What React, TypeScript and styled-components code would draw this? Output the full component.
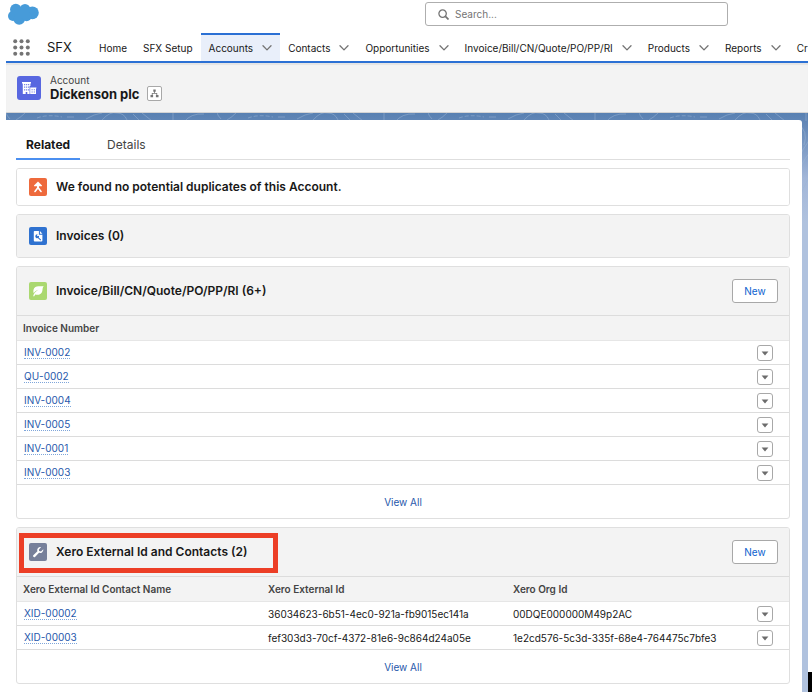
import React from "react";
import styled, { createGlobalStyle } from "styled-components";

const Global = createGlobalStyle`
  *, *::before, *::after { box-sizing: border-box; }
  body { margin: 0; background: #fff; color: #181818; font-family: Inter, "Liberation Sans", sans-serif; font-size: 10px; line-height: 12px; }
  button, input { font: inherit; color: inherit; }
  a { text-decoration: none; }
`;

const Shell = styled.div`
  display: flex;
  padding: 0 0 6px 6px;
  overflow: hidden;
`;
const Main = styled.div`
  flex: 1;
  min-width: 0;
`;
const Gutter = styled.div`
  display: flex;
  flex-direction: column;
  justify-content: flex-end;
  width: 4px;
`;
const GutterMark = styled.div`
  height: 20px;
  background: #000;
`;

const TopBar = styled.header`
  display: flex;
  justify-content: space-between;
  align-items: flex-start;
  height: 33px;
  padding: 2px 80px 0 2px;
`;
const SearchBox = styled.label`
  display: flex;
  align-items: center;
  gap: 6px;
  width: 303px;
  height: 24px;
  padding: 0 12px;
  border: 1px solid #aeaeae;
  border-radius: 3px;
  color: #747474;
`;
const SearchInput = styled.input`
  flex: 1;
  min-width: 0;
  padding: 0;
  border: 0;
  outline: 0;
  background: none;
  &::placeholder { color: #747474; opacity: 1; }
`;

const NavBar = styled.nav`
  display: flex;
  align-items: stretch;
  height: 30px;
  border-bottom: 2px solid #2b70d4;
  overflow: hidden;
`;
const Launcher = styled.button`
  display: flex;
  flex: none;
  align-items: center;
  padding: 0 0 0 7px;
  border: 0;
  background: none;
`;
const AppName = styled.span`
  display: flex;
  flex: none;
  align-items: center;
  width: 44px;
  margin-left: 17px;
  font-size: 13px;
`;
const NavItem = styled.div<{ $active?: boolean }>`
  display: flex;
  flex: none;
  align-items: center;
  gap: 9px;
  padding: 0 8px;
  border-top: 2px solid ${(p) => (p.$active ? "#2b70d4" : "transparent")};
  background: ${(p) => (p.$active ? "#e9effa" : "none")};
`;
const NavLink = styled.a`
  color: #181818;
  white-space: nowrap;
`;
const NavToggle = styled.button`
  display: flex;
  padding: 0;
  border: 0;
  background: none;
`;

const RecordHeader = styled.section`
  display: flex;
  align-items: center;
  gap: 9px;
  height: 50px;
  padding: 0 11px;
  background: #f3f3f3;
  border-bottom: 1px solid #d4d4d4;
  box-shadow: inset 0 2px 1px #e4e4e4;
`;
const RecordKind = styled.div`
  color: #444;
`;
const RecordTitle = styled.div`
  display: flex;
  align-items: center;
  gap: 8px;
`;
const RecordName = styled.h1`
  margin: 0;
  font-size: 13px;
  line-height: 16px;
  font-weight: 700;
`;
const HierarchyButton = styled.button`
  display: grid;
  place-items: center;
  width: 15px;
  height: 15px;
  padding: 0;
  border: 1px solid #a8a8a8;
  border-radius: 2px;
  background: #fff;
`;

const Stage = styled.main`
  position: relative;
  padding: 7px 6px 0 0;
  background: linear-gradient(#5880b2, #7897c2 30px, #a2b6d8 65px, #b0c2de 110px);
`;
const Contours = styled.svg`
  position: absolute;
  inset: 0;
  width: 100%;
  height: 90px;
`;
const Panel = styled.div`
  position: relative;
  padding: 9px 12px 8px 10px;
  border-top-right-radius: 3px;
  background: #fff;
`;
const TabRow = styled.div`
  display: flex;
  height: 31px;
  margin-bottom: 8px;
  border-bottom: 1px solid #dedede;
`;
const Tab = styled.button<{ $active?: boolean }>`
  height: 31px;
  padding: 2px 10px 0;
  margin-right: 17px;
  border: 0;
  border-bottom: 2px solid ${(p) => (p.$active ? "#4b8ff0" : "transparent")};
  background: none;
  font-size: 12px;
  font-weight: ${(p) => (p.$active ? 700 : 400)};
  color: ${(p) => (p.$active ? "#181818" : "#444")};
`;

const Cards = styled.div`
  display: grid;
  gap: 8px;
`;
const Card = styled.article`
  overflow: hidden;
  border: 1px solid #dfdfdf;
  border-radius: 3px;
`;
const CardHeader = styled.header<{ $size: "small" | "medium" | "large" }>`
  position: relative;
  display: flex;
  align-items: center;
  gap: 9px;
  height: ${(p) => ({ small: 36, medium: 42, large: 48 })[p.$size]}px;
  padding: 0 11px 0 12px;
  background: ${(p) => (p.$size === "small" ? "#fff" : "#f3f3f3")};
`;
const CardTitle = styled.h2`
  flex: 1;
  margin: 0;
  font-size: 12px;
  line-height: 16px;
  font-weight: 600;
`;
const NewButton = styled.button`
  width: 46px;
  height: 24px;
  padding: 0;
  border: 1px solid #a8a8a8;
  border-radius: 3px;
  background: #fff;
  color: #0b62cf;
`;
const Highlight = styled.div`
  position: absolute;
  top: 5px;
  left: 2px;
  width: 259px;
  height: 40px;
  border: 5px solid #ec3e26;
  pointer-events: none;
`;

const Table = styled.table`
  width: 100%;
  table-layout: fixed;
  border-spacing: 0;
  border-top: 1px solid #dcdcdc;
`;
const HeadCell = styled.th<{ $menu?: boolean }>`
  width: ${(p) => (p.$menu ? "37px" : "auto")};
  height: 25px;
  padding: 0 6px;
  background: #f3f3f3;
  border-bottom: 1px solid #e6e6e6;
  color: #444;
  font-weight: 600;
  text-align: left;
`;
const Cell = styled.td`
  height: 24px;
  padding: 0 6px;
  border-bottom: 1px solid #dcdcdc;
  white-space: nowrap;
`;
const MenuCell = styled(Cell)`
  padding: 1px 5px 0;
`;
const RecordLink = styled.a`
  display: inline-block;
  margin-left: 1px;
  border-bottom: 1px dotted #7fa6da;
  color: #1f58ab;
`;
const RowMenu = styled.button`
  display: grid;
  place-items: center;
  width: 16px;
  height: 16px;
  padding: 0;
  border: 1px solid #a8a8a8;
  border-radius: 3px;
  background: #fff;
`;
const CardFooter = styled.footer`
  display: grid;
  place-items: center;
  height: 33px;
`;
const ViewAll = styled.a`
  color: #1f58ab;
`;
const Drawing = styled.svg`
  display: block;
  flex: none;
`;

const Cloud = () => (
  <Drawing width="31" height="23" viewBox="0 0 31 23" fill="#479bd9">
    <circle cx="7.8" cy="7.6" r="5.8" />
    <circle cx="17" cy="7.2" r="5.3" />
    <circle cx="24.4" cy="10.8" r="6.4" />
    <circle cx="4.9" cy="14" r="4.9" />
    <circle cx="11.2" cy="16.9" r="5.9" />
    <circle cx="18.6" cy="14.3" r="5" />
    <rect x="7" y="6" width="14" height="10" />
  </Drawing>
);
const SearchIcon = () => (
  <Drawing width="11" height="11" viewBox="0 0 11 11" fill="none" stroke="#747474" strokeWidth="1.3">
    <circle cx="4.6" cy="4.6" r="3.7" />
    <path d="M7.4 7.4L10.5 10.5" strokeWidth="1.7" />
  </Drawing>
);
const Waffle = () => (
  <Drawing width="17" height="17" viewBox="0 0 17 17" fill="#747474">
    {[2.2, 8.5, 14.8].map((y) => [2.2, 8.5, 14.8].map((x) => <circle key={`${x}-${y}`} cx={x} cy={y} r="2" />))}
  </Drawing>
);
const Chevron = () => (
  <Drawing width="10" height="6" viewBox="0 0 10 6" fill="none" stroke="#747474" strokeWidth="1.3" strokeLinecap="round" strokeLinejoin="round">
    <path d="M1 .8L5 4.9L9 .8" />
  </Drawing>
);
const Triangle = () => (
  <Drawing width="8" height="5" viewBox="0 0 8 5" fill="#6c6c6c">
    <path d="M.6 .4H7.4L4 4.6Z" />
  </Drawing>
);
const Hierarchy = () => (
  <Drawing width="9" height="9" viewBox="0 0 9 9" fill="#747474">
    <path d="M3.3 .6H5.7V2.8H4.9V4H7.2V5.9H8.5V8.3H5.9V5.9H6.4V4.8H2.6V5.9H3.1V8.3H.5V5.9H1.8V4H4.1V2.8H3.3Z" />
  </Drawing>
);
const AccountIcon = () => (
  <Drawing width="24" height="24" viewBox="0 0 24 24">
    <rect width="24" height="24" rx="3" fill="#5867e0" />
    <path d="M5 6H14V7.4H13.4V10H12.6V18H5.8V7.4H5ZM13.2 11.4H19.4V12.6H19V18H13.2Z" fill="#fff" />
    <path d="M7.2 8h1v1.2h-1zM9.2 8h1v1.2h-1zM11.2 8h1v1.2h-1zM7.2 10.6h1v1.2h-1zM9.2 10.6h1v1.2h-1zM11.2 10.6h1v1.2h-1zM7.2 13.2h1v1.2h-1zM9.2 13.2h1v1.2h-1zM11.2 13.2h1v1.2h-1zM8.7 15.9h1.6v2.1H8.7zM14.6 13.3h1v1h-1zM16.8 13.3h1v1h-1zM14.6 15.6h1v1h-1zM16.8 15.6h1v1h-1z" fill="#5867e0" />
  </Drawing>
);
const MergeIcon = () => (
  <Drawing width="18" height="18" viewBox="0 0 18 18">
    <rect width="18" height="18" rx="2" fill="#ee6a3c" />
    <path d="M9 3.5L13 7.6Q13.2 8.2 12.6 8.2H10V9.6L12.8 13.3Q13 13.9 12.4 14.3Q11.8 14.5 11.4 14.1L9 11.1L6.6 14.1Q6.2 14.5 5.6 14.3Q5 13.9 5.2 13.3L8 9.6V8.2H5.4Q4.8 8.2 5 7.6Z" fill="#fff" />
  </Drawing>
);
const InvoiceIcon = () => (
  <Drawing width="18" height="18" viewBox="0 0 18 18">
    <rect width="18" height="18" rx="2" fill="#2f72d0" />
    <path d="M5 4H9.9V7.8H13.4V13.4Q13.4 14.4 12.4 14.4H5.8Q4.8 14.4 4.8 13.4V4.8Q4.8 4 5.6 4ZM10.9 4L13.4 6.7H10.9Z" fill="#fff" />
    <path d="M6.3 8.9A2 2 0 0 1 8.6 7.4L7.9 8.6L8.8 9.3L10 8.7A2 2 0 0 1 9.7 10.4L12.2 12.7L11.5 13.5L8.8 11.1A2 2 0 0 1 6.3 8.9Z" fill="#2f72d0" />
  </Drawing>
);
const LeafIcon = () => (
  <Drawing width="18" height="18" viewBox="0 0 18 18">
    <rect width="18" height="18" rx="2" fill="#aad870" />
    <path d="M14.6 4C11.8 5 8.8 3.3 6.4 5C4.2 6.6 4 9.2 4.7 11.2C5.8 9.5 7.4 8.3 9.6 7.5C7.3 9.2 4.7 11.1 4.1 14.3H5.3C5.5 13.5 5.8 13 6.2 12.4C8.7 13.3 11.4 12.8 12.8 10.5C14 8.3 13 6.4 14.6 4Z" fill="#fff" />
  </Drawing>
);
const WrenchIcon = () => (
  <Drawing width="18" height="18" viewBox="0 0 18 18">
    <rect width="18" height="18" rx="2" fill="#77809a" />
    <path d="M14.3 6.3C14.4 7.7 13.9 8.7 13 9.4C12 10.1 10.9 10 10 9.8L6 13.9C5 14.8 3.4 13.3 4.3 12.3L8.4 8.3C7.9 6.9 8.4 5.5 9.3 4.7C10.1 4 11 3.9 12 4.2L9.9 6.4L10.1 8.1L12 8.4Z" fill="#fff" />
  </Drawing>
);

const SwirlPattern = () => (
  <Contours aria-hidden="true">
    <defs>
      <pattern id="contours" width="211" height="90" patternUnits="userSpaceOnUse">
        <g fill="none" stroke="#9ab4d4" strokeOpacity=".5">
          <path d="M10 7Q15 4 19 0M61 4H68M80 6Q88 1 96 0M96 7Q104 -2 111 0Q118 0 121 7M127 1L134 8M136 0L146 8M167 8V0M178 9Q185 0 198 1M4 6Q1 3 0 0" />
          <path d="M171 26Q163 36 158 50M173 38Q166 43 160 58M170 65Q164 74 159 90M158 10Q170 18 165 32" />
          <path d="M31 5Q42 1 56 4" strokeDasharray="4 2" />
        </g>
      </pattern>
    </defs>
    <rect width="100%" height="90" fill="url(#contours)" />
  </Contours>
);

const navItems = [
  { label: "Home" },
  { label: "SFX Setup" },
  { label: "Accounts", menu: true, active: true },
  { label: "Contacts", menu: true },
  { label: "Opportunities", menu: true },
  { label: "Invoice/Bill/CN/Quote/PO/PP/RI", menu: true },
  { label: "Products", menu: true },
  { label: "Reports", menu: true },
  { label: "Cr" },
];

type RecordTableProps = { columns: string[]; rows: string[][] };

const RecordTable = ({ columns, rows }: RecordTableProps) => (
  <Table>
    <thead>
      <tr>
        {columns.map((c) => (
          <HeadCell key={c} scope="col">{c}</HeadCell>
        ))}
        <HeadCell $menu aria-label="Actions" />
      </tr>
    </thead>
    <tbody>
      {rows.map(([name, ...values]) => (
        <tr key={name}>
          <Cell><RecordLink href="#">{name}</RecordLink></Cell>
          {values.map((v) => <Cell key={v}>{v}</Cell>)}
          <MenuCell>
            <RowMenu aria-label={`Actions for ${name}`}><Triangle /></RowMenu>
          </MenuCell>
        </tr>
      ))}
    </tbody>
  </Table>
);

export default function App() {
  return (
    <>
      <Global />
      <Shell>
        <Main>
          <TopBar>
            <Cloud />
            <SearchBox>
              <SearchIcon />
              <SearchInput type="search" placeholder="Search..." aria-label="Search" />
            </SearchBox>
          </TopBar>
          <NavBar>
            <Launcher aria-label="App launcher"><Waffle /></Launcher>
            <AppName>SFX</AppName>
            {navItems.map(({ label, menu, active }) => (
              <NavItem key={label} $active={active}>
                <NavLink href="#">{label}</NavLink>
                {menu && <NavToggle aria-label={`${label} menu`}><Chevron /></NavToggle>}
              </NavItem>
            ))}
          </NavBar>
          <RecordHeader>
            <AccountIcon />
            <div>
              <RecordKind>Account</RecordKind>
              <RecordTitle>
                <RecordName>Dickenson plc</RecordName>
                <HierarchyButton aria-label="View account hierarchy"><Hierarchy /></HierarchyButton>
              </RecordTitle>
            </div>
          </RecordHeader>
          <Stage>
            <SwirlPattern />
            <Panel>
              <TabRow role="tablist">
                <Tab role="tab" aria-selected="true" $active>Related</Tab>
                <Tab role="tab" aria-selected="false">Details</Tab>
              </TabRow>
              <Cards>
                <Card>
                  <CardHeader $size="small">
                    <MergeIcon />
                    <CardTitle>We found no potential duplicates of this Account.</CardTitle>
                  </CardHeader>
                </Card>
                <Card>
                  <CardHeader $size="medium">
                    <InvoiceIcon />
                    <CardTitle>Invoices (0)</CardTitle>
                  </CardHeader>
                </Card>
                <Card>
                  <CardHeader $size="large">
                    <LeafIcon />
                    <CardTitle>Invoice/Bill/CN/Quote/PO/PP/RI (6+)</CardTitle>
                    <NewButton>New</NewButton>
                  </CardHeader>
                  <RecordTable
                    columns={["Invoice Number"]}
                    rows={[["INV-0002"], ["QU-0002"], ["INV-0004"], ["INV-0005"], ["INV-0001"], ["INV-0003"]]}
                  />
                  <CardFooter><ViewAll href="#">View All</ViewAll></CardFooter>
                </Card>
                <Card>
                  <CardHeader $size="large">
                    <WrenchIcon />
                    <CardTitle>Xero External Id and Contacts (2)</CardTitle>
                    <NewButton>New</NewButton>
                    <Highlight />
                  </CardHeader>
                  <RecordTable
                    columns={["Xero External Id Contact Name", "Xero External Id", "Xero Org Id"]}
                    rows={[
                      ["XID-00002", "36034623-6b51-4ec0-921a-fb9015ec141a", "00DQE000000M49p2AC"],
                      ["XID-00003", "fef303d3-70cf-4372-81e6-9c864d24a05e", "1e2cd576-5c3d-335f-68e4-764475c7bfe3"],
                    ]}
                  />
                  <CardFooter><ViewAll href="#">View All</ViewAll></CardFooter>
                </Card>
              </Cards>
            </Panel>
          </Stage>
        </Main>
        <Gutter><GutterMark /></Gutter>
      </Shell>
    </>
  );
}
